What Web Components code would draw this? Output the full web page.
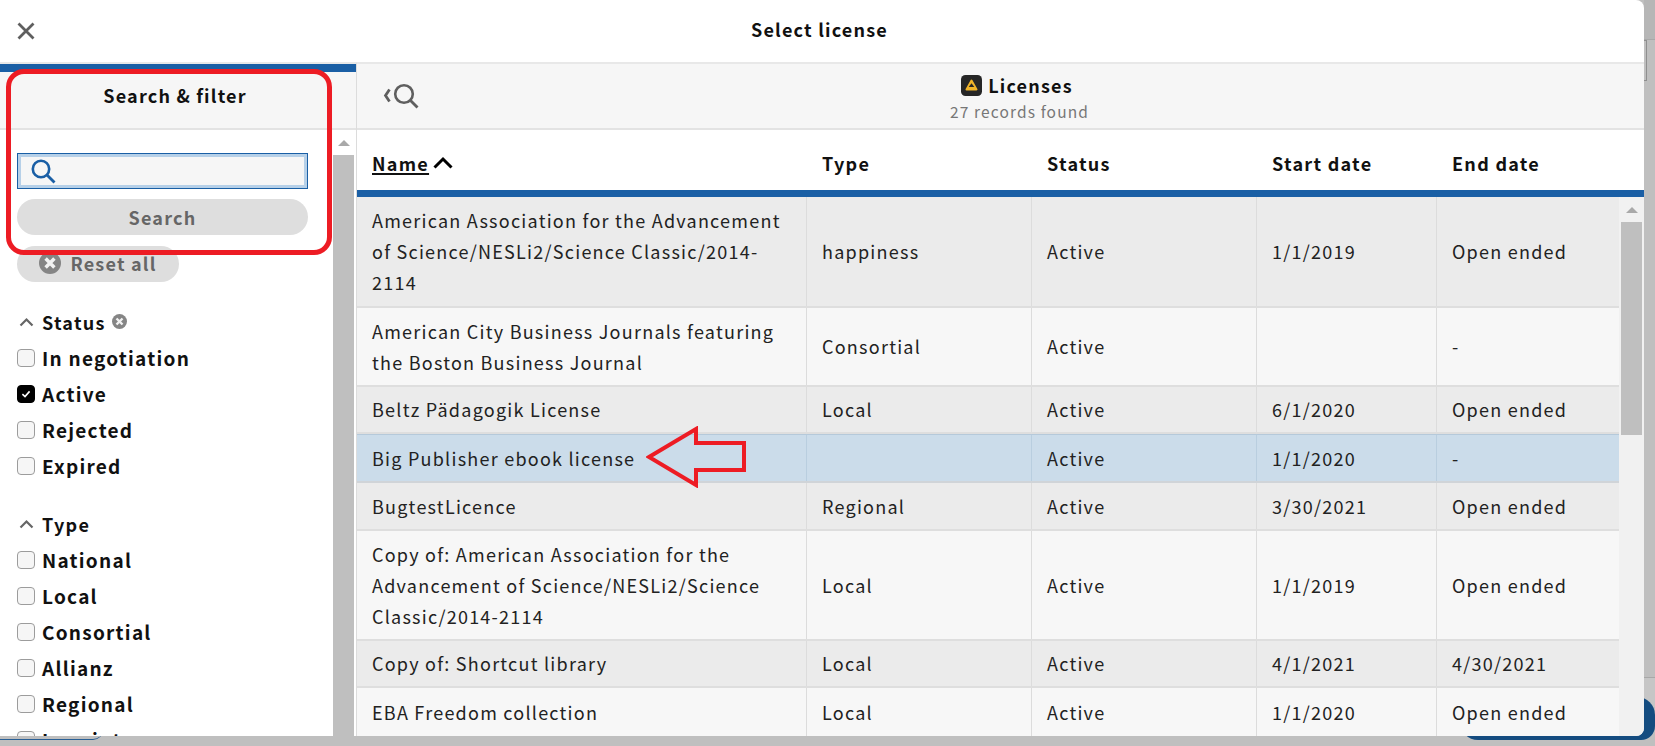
<!DOCTYPE html>
<html lang="en"><head><meta charset="utf-8">
<style>
html,body{margin:0;padding:0;height:746px;overflow:hidden;background:#bdbdbd}
body{font-family:"Noto Sans CJK JP","Noto Sans",sans-serif;color:#000}
</style></head><body>
<license-modal></license-modal>
<template id="modal-t"><style>
:host{display:block;position:relative;width:1655px;height:746px;overflow:hidden;background:#bfbfbf}
.strip-top{position:absolute;left:1644px;top:0;width:11px;height:40px;box-sizing:border-box;background:#b6b6b6;border-bottom:1px solid #a8a8a8}
.strip-low{position:absolute;left:1644px;top:677px;width:11px;height:30px;box-sizing:border-box;background:#c6c6c6;border-top:1px solid #a8a8a8}
.backdrop-btn{position:absolute;left:1460px;top:697px;width:195px;height:43px;border-radius:0 18px 14px 18px;background:#144c80}
.backdrop-left{position:absolute;left:0;top:710px;width:103px;height:30px;box-sizing:border-box;border-radius:0 0 10px 0;border-bottom:1px solid #2a5f95}
.sb{position:absolute;left:1644px;top:40px;width:2px;height:39px;border:1px solid #8f8f8f;border-left:0}
.dialog{position:absolute;left:0;top:0;width:1644px;height:736px;background:#fff;border-radius:0 8px 8px 0;overflow:hidden;display:flex;flex-direction:column}
.body{flex:1;display:flex;min-height:0}
</style>
<div class="strip-top"></div><div class="strip-low"></div><div class="backdrop-left"></div><div class="backdrop-btn"></div><div class="sb"></div>
<div class="dialog"><modal-head></modal-head><div class="body"><filter-pane></filter-pane><results-pane></results-pane></div></div>
<red-marks></red-marks>
</template>

<template id="head-t"><style>
:host{display:flex;flex:none;height:62px;align-items:center;justify-content:center;position:relative;box-sizing:border-box;padding:0 5px 5px 0}
button{position:absolute;left:16px;top:21px;width:20px;height:20px;border:0;background:none;padding:0}
svg{display:block}
.t{font-weight:700;font-size:18px;letter-spacing:1.2px;color:#111}
</style><button aria-label="Close"><svg width="20" height="20" viewBox="0 0 20 20"><path d="M2.500 2.500 17.500 17.500M17.500 2.500 2.500 17.500" stroke="#5f5f5f" stroke-width="2.800" fill="none"/></svg></button><span class="t">Select license</span></template>

<template id="filter-t"><style>
:host{display:flex;flex-direction:column;flex:none;width:357px;height:100%;box-sizing:border-box;border-right:1px solid #dcdcdc;border-top:2px solid #e8e8e8}
.bar{height:8px;background:#1a5fa5;flex:none}
.hd{flex:none;height:58px;box-sizing:border-box;background:#f6f6f6;border-bottom:2px solid #e3e3e3;display:flex;align-items:center;justify-content:center;font-weight:700;font-size:18px;letter-spacing:1.2px;color:#111;padding:0 6px 10px 0}
.scroll{flex:1;display:flex;min-height:0}
.c{flex:1;padding:23px 0 0 17px;overflow:hidden;min-width:0}
.track{flex:none;width:23px;display:flex;flex-direction:column;align-items:center;box-sizing:border-box;padding-right:2px}
.arrow{width:0;height:0;border:6px solid transparent;border-bottom:6px solid #a9a9a9;border-top:0;margin-top:10px;margin-bottom:9px}
.thumb{flex:1;width:21px;background:#bfbfbf}
.search{width:291px;height:36px;box-sizing:border-box;border:1px solid #1a5fa5;outline:3px solid #b6d0e8;outline-offset:-4px;background:#f6f6f6;display:flex;align-items:center;padding-left:13px}
.sbtn{width:291px;height:36px;margin-top:10px;border-radius:18px;background:#dedede;color:#666;font-weight:700;font-size:18px;letter-spacing:1.2px;display:flex;align-items:center;justify-content:center}
.reset{width:162px;height:36px;margin-top:11px;border-radius:18px;background:#dedede;color:#666;font-weight:700;font-size:18px;letter-spacing:1.2px;display:flex;align-items:center;justify-content:center;gap:9px;box-sizing:border-box;padding-bottom:3px}
svg{display:block;flex:none}
</style><div class="bar"></div><div class="hd">Search &amp; filter</div>
<div class="scroll"><div class="c">
<div class="search"><svg width="25" height="25" viewBox="0 0 25 25"><circle cx="10" cy="10" r="8.200" fill="none" stroke="#1a5fa5" stroke-width="2.600"/><path d="M16 16 23.500 23.500" stroke="#1a5fa5" stroke-width="2.800"/></svg></div>
<div class="sbtn">Search</div>
<div class="reset"><x-clear size="22"></x-clear><span>Reset all</span></div>
<filter-group title="Status" clear style="margin-top:22px"><filter-check>In negotiation</filter-check><filter-check checked>Active</filter-check><filter-check>Rejected</filter-check><filter-check>Expired</filter-check></filter-group>
<filter-group title="Type" style="margin-top:22px"><filter-check>National</filter-check><filter-check>Local</filter-check><filter-check>Consortial</filter-check><filter-check>Allianz</filter-check><filter-check>Regional</filter-check><filter-check>Imprint</filter-check></filter-group>
</div><div class="track"><div class="arrow"></div><div class="thumb"></div></div></div></template>

<template id="group-t"><style>
:host{display:block}
.h{display:flex;align-items:center;height:36px;font-weight:700;font-size:18px;letter-spacing:1.25px;color:#111}
svg{display:block;flex:none;margin:0 8px 0 2px}
x-clear{margin-left:6px;position:relative;top:-1px}
</style><div class="h"><svg width="15" height="15" viewBox="0 0 15 15"><path d="M1.500 10.500 7.500 4.500 13.500 10.500" fill="none" stroke="#666" stroke-width="2.200"/></svg><span id="t"></span><x-clear size="15" id="x"></x-clear></div><slot></slot></template>

<template id="check-t"><style>
:host{display:flex;align-items:center;height:36px;font-weight:700;font-size:19px;letter-spacing:1.25px;color:#111}
.b{width:18px;height:18px;box-sizing:border-box;border:1px solid #9c9c9c;border-radius:4px;background:#f6f6f6;margin-right:7px;flex:none}
:host([checked]) .b{background:#000;border-color:#000;display:flex;align-items:center;justify-content:center}
svg{display:none}
:host([checked]) svg{display:block}
.l{margin-bottom:2px}
</style><span class="b"><svg width="12" height="12" viewBox="0 0 12 12"><path d="M2.400 6.200 5 8.600 9.600 3.400" fill="none" stroke="#fff" stroke-width="1.600"/></svg></span><span class="l"><slot></slot></span></template>

<template id="results-t"><style>
:host{display:flex;flex-direction:column;flex:1;min-width:0;height:100%;border-top:2px solid #e8e8e8;box-sizing:border-box;position:relative}
.hd{flex:none;height:66px;box-sizing:border-box;background:#f6f6f6;border-bottom:2px solid #e3e3e3;display:flex;flex-direction:column;align-items:center;padding:8px 0 0 38px}
.ttl{display:flex;align-items:center;gap:6px;font-weight:700;font-size:18px;letter-spacing:1.2px;color:#111;height:26px;margin-right:5px}
.cnt{font-size:15.500px;letter-spacing:1.13px;color:#777;margin-top:2px;line-height:22px}
.back{position:absolute;left:26px;top:18px}
.thead{flex:none;height:60px;display:grid;grid-template-columns:var(--cols);align-items:center;font-weight:700;font-size:18px;letter-spacing:1.28px;color:#111;padding-top:6px;box-sizing:border-box}
.thead span{padding-left:15px;display:flex;align-items:center;gap:4px}
.thead u{text-underline-offset:2px;text-decoration-thickness:2px}
.bar{flex:none;height:7px;background:#1a5fa5}
.wrap{flex:1;display:flex;min-height:0}
.rows{flex:1;min-width:0;overflow:hidden}
.track{flex:none;width:25px;background:#f1f1f1;display:flex;flex-direction:column;align-items:center}
.arrow{width:0;height:0;border:6px solid transparent;border-bottom:6px solid #a9a9a9;border-top:0;margin-top:10px;margin-bottom:9px}
.thumb{width:21px;height:213px;background:#bfbfbf}
svg{display:block}
</style>
<div class="hd"><div class="back"><svg width="36" height="28" viewBox="0 0 36 28"><path d="M6.500 7.500 2.500 13.500 6.500 19.500" fill="none" stroke="#5f5f5f" stroke-width="2.800"/><circle cx="21" cy="12" r="8.800" fill="none" stroke="#5f5f5f" stroke-width="2.600"/><path d="M27.500 18.500 34.500 25.500" stroke="#5f5f5f" stroke-width="2.800"/></svg></div>
<div class="ttl"><svg width="21" height="21" viewBox="0 0 21 21"><rect width="21" height="21" rx="4.500" fill="#262626"/><path d="M10.500 5.500 15.500 14.500H5.500Z" fill="#f0b429" stroke="#f0b429" stroke-width="2" stroke-linejoin="round"/><path d="M10.500 8.200 13.300 12H7.700Z" fill="#262626"/></svg><span>Licenses</span></div><div class="cnt">27 records found</div></div>
<div class="thead"><span><u>Name</u><svg width="20" height="14" viewBox="0 0 20 14"><path d="M1.500 11.500 10 3 18.500 11.500" fill="none" stroke="#000" stroke-width="3"/></svg></span><span>Type</span><span>Status</span><span>Start date</span><span>End date</span></div>
<div class="bar"></div>
<div class="wrap"><div class="rows">
<license-row h="111" name="American Association for the Advancement of Science/NESLi2/Science Classic/2014-2114" type="happiness" start="1/1/2019" end="Open ended"></license-row>
<license-row alt h="79" name="American City Business Journals featuring the Boston Business Journal" type="Consortial" start="" end="-"></license-row>
<license-row h="47" name="Beltz Pädagogik License" type="Local" start="6/1/2020" end="Open ended"></license-row>
<license-row sel h="49" name="Big Publisher ebook license" type="" start="1/1/2020" end="-"></license-row>
<license-row h="48" name="BugtestLicence" type="Regional" start="3/30/2021" end="Open ended"></license-row>
<license-row alt h="110" name="Copy of: American Association for the Advancement of Science/NESLi2/Science Classic/2014-2114" type="Local" start="1/1/2019" end="Open ended"></license-row>
<license-row h="47" name="Copy of: Shortcut library" type="Local" start="4/1/2021" end="4/30/2021"></license-row>
<license-row alt h="50" name="EBA Freedom collection" type="Local" start="1/1/2020" end="Open ended"></license-row>
</div><div class="track"><div class="arrow"></div><div class="thumb"></div></div></div></template>

<template id="row-t"><style>
:host{display:grid;grid-template-columns:var(--cols);box-sizing:border-box;background:#ebebeb;border-bottom:2px solid #dedede;font-size:18px;letter-spacing:1.24px;line-height:31px;color:#222}
:host([alt]){background:#f7f7f7}
:host([sel]){background:#cbdcea;border-top:1px solid #b5c9da;border-bottom-color:#d0d4d8}
div{padding:0 15px;display:flex;align-items:center;border-right:1px solid #dcdcdc;box-sizing:border-box;min-width:0}
div:last-child{border-right:0}
:host([sel]) div{border-right-color:#b9cedf}
:host([sel]) div:last-child{border-right:0}
</style><div id="n"></div><div id="t"></div><div>Active</div><div id="s"></div><div id="e"></div></template>

<template id="marks-t"><style>
:host{display:block;position:absolute;left:0;top:0;width:0;height:0}
.box{position:absolute;left:6px;top:69px;width:326px;height:186px;box-sizing:border-box;border:5px solid #ed1c24;border-radius:18px}
svg{position:absolute;left:646px;top:426px}
</style><div class="box"></div><svg width="104" height="62" viewBox="0 0 104 62"><path d="M3 31 50 3V17H98V44H50V59Z" fill="none" stroke="#ed1c24" stroke-width="4"/></svg></template>

<script>
const mount=(el,id)=>{const r=el.attachShadow({mode:'open'});r.appendChild(document.getElementById(id).content.cloneNode(true));return r};
class Base extends HTMLElement{}
customElements.define('license-modal',class extends Base{constructor(){super();mount(this,'modal-t')}});
customElements.define('modal-head',class extends Base{constructor(){super();mount(this,'head-t')}});
customElements.define('filter-pane',class extends Base{constructor(){super();mount(this,'filter-t')}});
customElements.define('results-pane',class extends Base{constructor(){super();const r=mount(this,'results-t');this.style.setProperty('--cols','450px 225px 225px 180px 1fr')}});
customElements.define('red-marks',class extends Base{constructor(){super();mount(this,'marks-t')}});
customElements.define('filter-group',class extends Base{connectedCallback(){if(this.shadowRoot)return;const r=mount(this,'group-t');r.getElementById('t').textContent=this.getAttribute('title');if(!this.hasAttribute('clear'))r.getElementById('x').remove()}});
customElements.define('filter-check',class extends Base{constructor(){super();mount(this,'check-t')}});
customElements.define('x-clear',class extends Base{connectedCallback(){if(this.shadowRoot)return;const s=this.getAttribute('size');const r=this.attachShadow({mode:'open'});r.innerHTML=`<style>:host{display:inline-flex}svg{display:block}</style><svg width="${s}" height="${s}" viewBox="0 0 20 20"><circle cx="10" cy="10" r="10" fill="#858585"/><path d="M6 6 14 14M14 6 6 14" stroke="#f2f2f2" stroke-width="3.200"/></svg>`}});
customElements.define('license-row',class extends Base{connectedCallback(){if(this.shadowRoot)return;const r=mount(this,'row-t');const a=k=>this.getAttribute(k);r.getElementById('n').textContent=a('name');r.getElementById('t').textContent=a('type');r.getElementById('s').textContent=a('start');r.getElementById('e').textContent=a('end');this.style.height=a('h')+'px'}});
</script>
</body></html>
